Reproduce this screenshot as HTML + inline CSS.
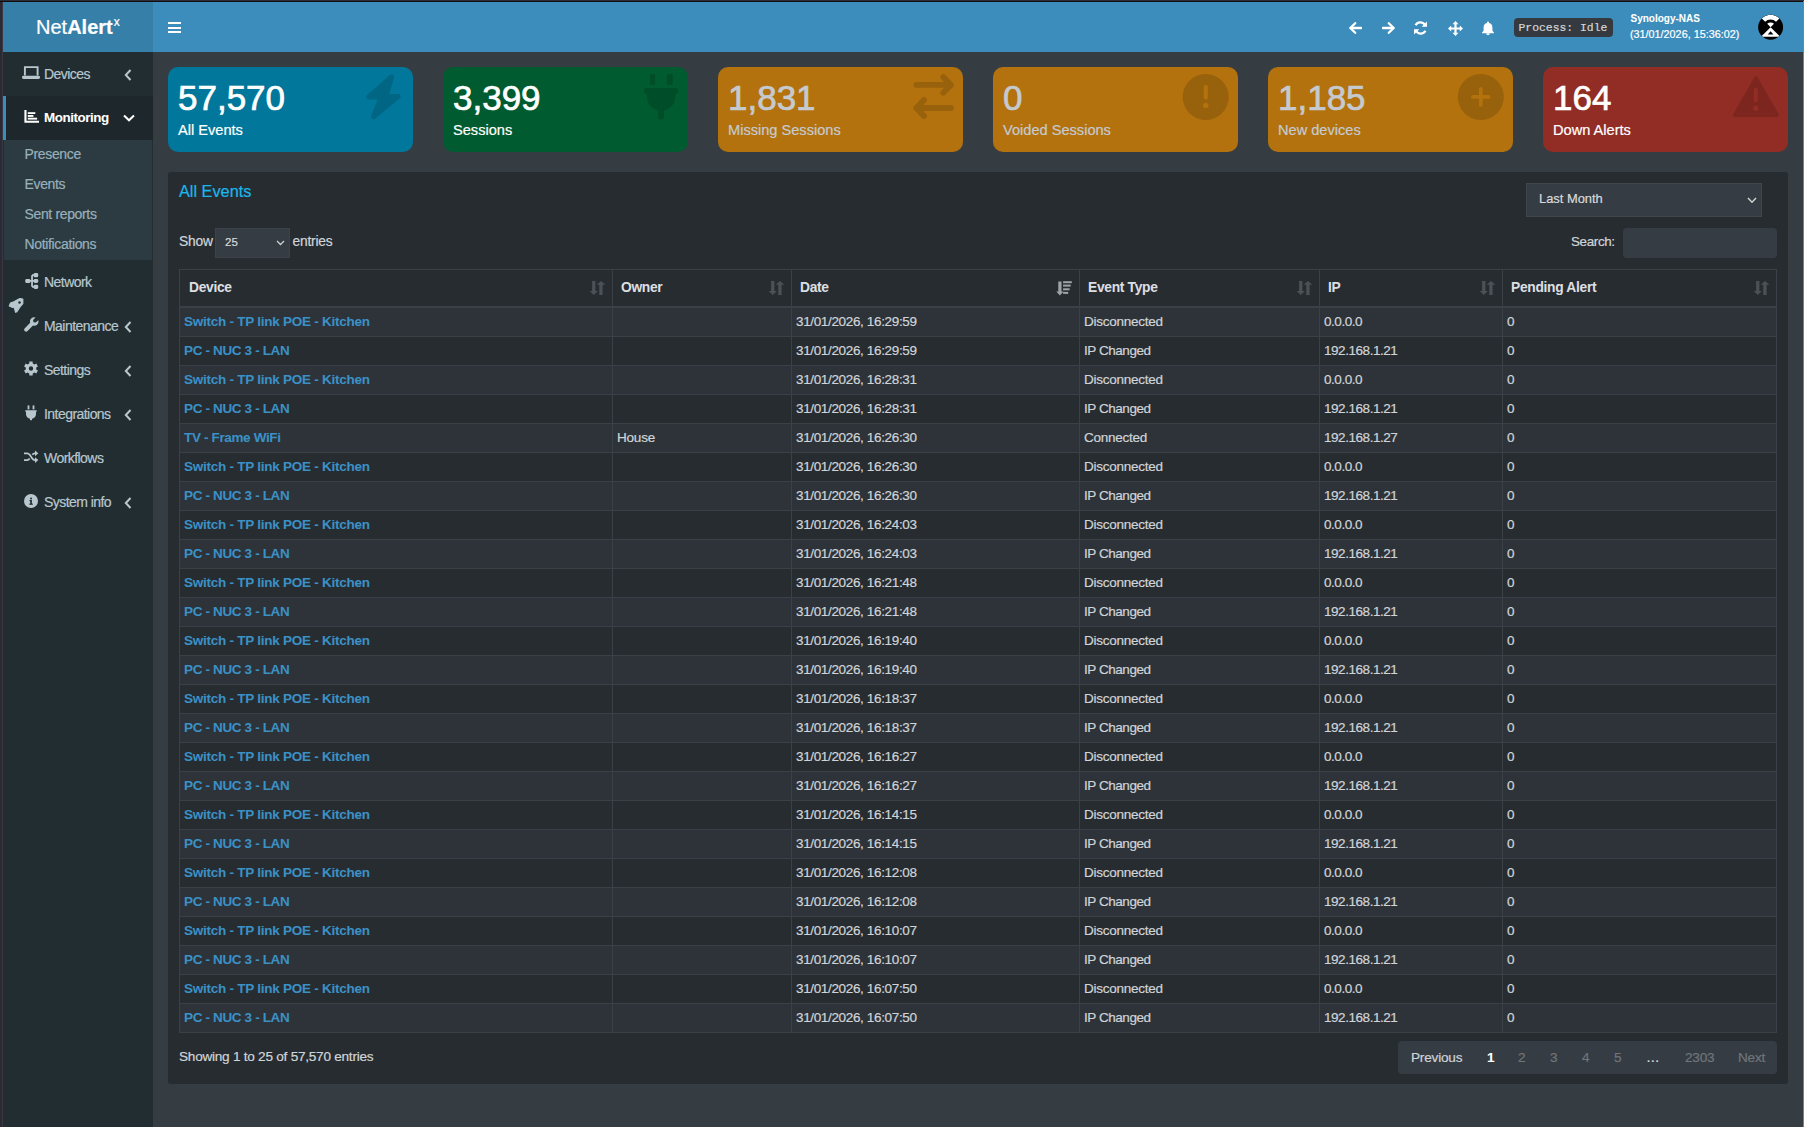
<!DOCTYPE html><html><head><meta charset="utf-8"><style>
*{margin:0;padding:0;box-sizing:border-box}
html,body{width:1804px;height:1127px;overflow:hidden;background:#353c42;font-family:"Liberation Sans",sans-serif;}
.ab{position:absolute}
.t{position:absolute;white-space:nowrap;-webkit-text-stroke:0.2px currentColor}
.n{-webkit-text-stroke:0.7px currentColor}
.t[style*="font-weight:bold"]{-webkit-text-stroke:0.05px currentColor}
</style></head><body>

<div class="ab" style="left:0;top:0;width:1804px;height:1127px;background:#353c42"></div>
<div class="ab" style="left:0;top:2px;width:1804px;height:50px;background:#3c8dbc"></div>
<div class="ab" style="left:3px;top:2px;width:150px;height:50px;background:#367fa9"></div>
<div class="t" style="left:36px;top:13px;font-size:20px;line-height:28px;color:#fff">Net<b>Alert</b><sup style="font-size:12px;vertical-align:0;position:relative;top:-8px;margin-left:1px">x</sup></div>
<div class="ab" style="left:168px;top:22px;width:13px;height:2px;background:#fff"></div><div class="ab" style="left:168px;top:26.5px;width:13px;height:2px;background:#fff"></div><div class="ab" style="left:168px;top:31px;width:13px;height:2px;background:#fff"></div>
<svg class="ab" style="left:1349px;top:21.5px" width="13" height="12" viewBox="0 0 13 12"><path d="M1.3 6h11M6.2 1.2L1.3 6L6.2 10.8" stroke="#fff" stroke-width="2.3" fill="none" stroke-linecap="round" stroke-linejoin="round"/></svg>
<svg class="ab" style="left:1381.5px;top:21.5px" width="13" height="12" viewBox="0 0 13 12"><path d="M0.7 6h11M6.8 1.2L11.7 6L6.8 10.8" stroke="#fff" stroke-width="2.3" fill="none" stroke-linecap="round" stroke-linejoin="round"/></svg>
<svg class="ab" style="left:1413px;top:21px" width="15" height="14" viewBox="0 0 15 14"><path d="M12.3 5A5.3 5.3 0 0 0 2.6 4.2M2.7 9A5.3 5.3 0 0 0 12.4 9.8" stroke="#fff" stroke-width="2.3" fill="none"/><path d="M14 0.5v5.3H8.7z M1 13.5V8.2h5.3z" fill="#fff"/></svg>
<svg class="ab" style="left:1448px;top:21px" width="15" height="15" viewBox="0 0 15 15"><path d="M7.5 0L10.5 3.2H8.6V6.4H11.8V4.5L15 7.5L11.8 10.5V8.6H8.6V11.8H10.5L7.5 15L4.5 11.8H6.4V8.6H3.2V10.5L0 7.5L3.2 4.5V6.4H6.4V3.2H4.5Z" fill="#fff"/></svg>
<svg class="ab" style="left:1481px;top:21px" width="14" height="14" viewBox="0 0 14 14"><path d="M7 0.5a1 1 0 0 1 1 1v0.6a4.3 4.3 0 0 1 3.4 4.2v2.4c0 1.2 0.6 2.1 1.6 2.8v0.8H1v-0.8c1-0.7 1.6-1.6 1.6-2.8V6.3A4.3 4.3 0 0 1 6 2.1V1.5a1 1 0 0 1 1-1z M5.3 12.6h3.4a1.7 1.7 0 0 1-3.4 0z" fill="#fff"/></svg>
<div class="ab" style="left:1514px;top:18px;width:99px;height:19px;background:#343a40;border-radius:4px"></div>
<div class="t" style="left:1518.5px;top:19px;font-family:'Liberation Mono',monospace;font-size:11.4px;line-height:19px;color:#d6d6d6">Process: Idle</div>
<div class="t" style="left:1630.5px;top:11px;font-size:10px;line-height:15px;color:#fff;font-weight:bold">Synology-NAS</div>
<div class="t" style="left:1630px;top:27px;font-size:10.8px;line-height:15px;color:#fff">(31/01/2026, 15:36:02)</div>
<svg class="ab" style="left:1757px;top:14px" width="27" height="27" viewBox="0 0 27 27"><defs><clipPath id="av"><circle cx="13.6" cy="13.2" r="12.45"/></clipPath></defs><circle cx="13.6" cy="13.2" r="12.45" fill="#000"/><g clip-path="url(#av)" fill="#fff"><path d="M4.80 4.40A12.45 12.45 0 0 1 22.40 4.40L19.04 7.76A7.7 7.7 0 0 0 8.16 7.76Z"/><path d="M13.60 13.20L10.21 9.81A4.8 4.8 0 0 1 16.99 9.81Z"/><path d="M13.60 13.20L23.20 22.80L4.00 22.80Z"/></g><path d="M13.60 17.30L16.40 20.60L10.80 20.60Z" fill="#000"/></svg>
<div class="ab" style="left:1803px;top:0;width:1px;height:1127px;background:#808080"></div>
<div class="ab" style="left:0;top:0;width:1804px;height:1px;background:#2d2c38"></div><div class="ab" style="left:0;top:1px;width:1803px;height:1px;background:#0f0d0e"></div>
<div class="ab" style="left:3px;top:52px;width:150px;height:1075px;background:#222d32"></div>
<div class="ab" style="left:0;top:0;width:2px;height:1127px;background:#2a2935"></div><div class="ab" style="left:2px;top:2px;width:1px;height:1125px;background:#3a3840"></div><div class="ab" style="left:0;top:0;width:1804px;height:1px;background:#2d2c38"></div><div class="ab" style="left:0;top:1px;width:1803px;height:1px;background:#0f0d0e"></div>
<div class="ab" style="left:3px;top:96px;width:150px;height:44px;background:#1e282c;border-left:3px solid #3c8dbc"></div>
<div class="ab" style="left:4px;top:140px;width:148px;height:120px;background:#2c3b41"></div>
<div class="t" style="left:44px;top:51.5px;font-size:14px;line-height:44px;letter-spacing:-0.55px;color:#b8c7ce;">Devices</div>
<svg class="ab" style="left:22px;top:66px" width="18" height="13" viewBox="0 0 18 13"><path d="M2.9 9.5V1.1H15.6V9.5" stroke="#b8c7ce" stroke-width="1.9" fill="none"/><rect x="0" y="9.8" width="18" height="3.1" rx="1.4" fill="#b8c7ce"/></svg>
<svg class="ab" style="left:124px;top:69px" width="8" height="12" viewBox="0 0 8 12"><path d="M6.5 1L1.8 6L6.5 11" stroke="#b8c7ce" stroke-width="2" fill="none"/></svg>
<div class="t" style="left:44px;top:95.5px;font-size:13.4px;line-height:44px;letter-spacing:-0.45px;color:#fff;font-weight:bold;">Monitoring</div>
<svg class="ab" style="left:23.5px;top:110px" width="16" height="14" viewBox="0 0 16 14"><path d="M1.45 0V11.8H15" stroke="#fff" stroke-width="2.1" fill="none"/><rect x="3.8" y="2.2" width="7.5" height="1.8" fill="#fff"/><rect x="3.8" y="5" width="5.6" height="1.9" fill="#fff"/><rect x="3.8" y="7.7" width="9.3" height="1.9" fill="#fff"/></svg>
<svg class="ab" style="left:123px;top:114px" width="12" height="8" viewBox="0 0 12 8"><path d="M1 1.5L6 6.3L11 1.5" stroke="#fff" stroke-width="2" fill="none"/></svg>
<div class="t" style="left:24.5px;top:139px;font-size:14px;line-height:30px;letter-spacing:-0.35px;color:#98b0bb">Presence</div>
<div class="t" style="left:24.5px;top:169px;font-size:14px;line-height:30px;letter-spacing:-0.35px;color:#98b0bb">Events</div>
<div class="t" style="left:24.5px;top:199px;font-size:14px;line-height:30px;letter-spacing:-0.35px;color:#98b0bb">Sent reports</div>
<div class="t" style="left:24.5px;top:229px;font-size:14px;line-height:30px;letter-spacing:-0.35px;color:#98b0bb">Notifications</div>
<div class="t" style="left:44px;top:259.5px;font-size:14px;line-height:44px;letter-spacing:-0.55px;color:#b8c7ce;">Network</div>
<svg class="ab" style="left:25px;top:273px" width="14" height="16" viewBox="0 0 14 16"><rect x="0.3" y="5.9" width="5.1" height="4.1" rx="1.3" fill="#b8c7ce"/><rect x="8.6" y="0.1" width="4.6" height="4.2" rx="1.4" fill="#b8c7ce"/><rect x="8.6" y="5.9" width="4.6" height="4.1" rx="1.4" fill="#b8c7ce"/><rect x="8.6" y="11.7" width="4.6" height="4.3" rx="1.4" fill="#b8c7ce"/><path d="M5 7.95H9M7.05 2.2V13.8M7 2.2H9M7 13.8H9" stroke="#b8c7ce" stroke-width="1.8" fill="none"/></svg>
<svg class="ab" style="left:5px;top:294px" width="24" height="24" viewBox="0 0 24 24"><path d="M14.9 4.6L17.8 5.2L17.8 9.6L14.8 13.2L11.9 17.8L10.6 18.3L9.6 14.5L8.6 12.9L7.1 13.3L4.3 11.9L5.5 9.1L8.9 7.8Z" fill="#b8c7ce" stroke="#b8c7ce" stroke-width="1.2" stroke-linejoin="round"/><circle cx="14.5" cy="8.4" r="1.25" fill="#222d32"/></svg>
<div class="t" style="left:44px;top:303.5px;font-size:14px;line-height:44px;letter-spacing:-0.55px;color:#b8c7ce;">Maintenance</div>
<svg class="ab" style="left:24px;top:317px" width="15" height="15" viewBox="0 0 15 15"><path d="M14.2 3.2l-2.4 2.4l-2.3-0.4l-0.4-2.3l2.4-2.4a4.2 4.2 0 0 0-5.3 5.3L0.8 11.3a1.9 1.9 0 0 0 2.7 2.7L9 8.6a4.2 4.2 0 0 0 5.2-5.4z" fill="#b8c7ce"/></svg>
<svg class="ab" style="left:124px;top:321px" width="8" height="12" viewBox="0 0 8 12"><path d="M6.5 1L1.8 6L6.5 11" stroke="#b8c7ce" stroke-width="2" fill="none"/></svg>
<div class="t" style="left:44px;top:347.5px;font-size:14px;line-height:44px;letter-spacing:-0.55px;color:#b8c7ce;">Settings</div>
<svg class="ab" style="left:24px;top:361px" width="14" height="15" viewBox="0 0 14 15"><path fill-rule="evenodd" d="M5.27 2.49 L5.38 0.48 L8.62 0.48 L8.73 2.49 L10.48 3.50 L12.27 2.59 L13.89 5.39 L12.20 6.49 L12.20 8.51 L13.89 9.61 L12.27 12.41 L10.48 11.50 L8.73 12.51 L8.62 14.52 L5.38 14.52 L5.27 12.51 L3.52 11.50 L1.73 12.41 L0.11 9.61 L1.80 8.51 L1.80 6.49 L0.11 5.39 L1.73 2.59 L3.52 3.50Z M7 5.3A2.2 2.2 0 1 0 7 9.7A2.2 2.2 0 1 0 7 5.3Z" fill="#b8c7ce"/></svg>
<svg class="ab" style="left:124px;top:365px" width="8" height="12" viewBox="0 0 8 12"><path d="M6.5 1L1.8 6L6.5 11" stroke="#b8c7ce" stroke-width="2" fill="none"/></svg>
<div class="t" style="left:44px;top:391.5px;font-size:14px;line-height:44px;letter-spacing:-0.55px;color:#b8c7ce;">Integrations</div>
<svg class="ab" style="left:25px;top:405px" width="12" height="16" viewBox="0 0 12 16"><rect x="2.6" y="0.4" width="1.8" height="4" fill="#b8c7ce"/><rect x="7.6" y="0.4" width="1.8" height="4" fill="#b8c7ce"/><path d="M0.3 5.2H11.7V6.8H11V9A5 5 0 0 1 1 9V6.8H0.3Z" fill="#b8c7ce"/><rect x="5" y="12" width="2" height="3.2" fill="#b8c7ce"/></svg>
<svg class="ab" style="left:124px;top:409px" width="8" height="12" viewBox="0 0 8 12"><path d="M6.5 1L1.8 6L6.5 11" stroke="#b8c7ce" stroke-width="2" fill="none"/></svg>
<div class="t" style="left:44px;top:435.5px;font-size:14px;line-height:44px;letter-spacing:-0.55px;color:#b8c7ce;">Workflows</div>
<svg class="ab" style="left:24px;top:450px" width="15" height="14" viewBox="0 0 15 14"><path d="M0 3.3h3.2c1.2 0 1.8 0.5 2.5 1.5l2.6 3.8c0.7 1 1.3 1.5 2.5 1.5H11.8M0 10.1h3.2c1.2 0 1.8-0.5 2.5-1.5M8.3 4.8c0.7-1 1.3-1.5 2.5-1.5H11.8" stroke="#b8c7ce" stroke-width="1.8" fill="none"/><path d="M11 0.4l3.3 2.9l-3.3 2.9z M11 7.2l3.3 2.9l-3.3 2.9z" fill="#b8c7ce"/></svg>
<div class="t" style="left:44px;top:479.5px;font-size:14px;line-height:44px;letter-spacing:-0.55px;color:#b8c7ce;">System info</div>
<svg class="ab" style="left:24px;top:494px" width="14" height="14" viewBox="0 0 14 14"><circle cx="7" cy="7" r="7" fill="#b8c7ce"/><rect x="6.2" y="6.2" width="1.7" height="3.8" fill="#222d32"/><rect x="5.3" y="9.6" width="3.5" height="1.2" fill="#222d32"/><rect x="5.5" y="6" width="2.2" height="1.1" fill="#222d32"/><circle cx="7.05" cy="4.4" r="1" fill="#222d32"/></svg>
<svg class="ab" style="left:124px;top:497px" width="8" height="12" viewBox="0 0 8 12"><path d="M6.5 1L1.8 6L6.5 11" stroke="#b8c7ce" stroke-width="2" fill="none"/></svg>
<div class="ab" style="left:168px;top:67px;width:245px;height:85px;background:#01789b;border-radius:10px"></div>
<div class="t n" style="left:178px;top:76px;font-size:35px;line-height:44px;color:#fff">57,570</div>
<div class="t" style="left:178px;top:120px;font-size:14.6px;line-height:20px;color:#fff">All Events</div>
<svg class="ab" style="left:353px;top:67px" width="60" height="85" viewBox="0 0 60 85"><path d="M38.5 10L15.8 30L28.3 30.1L20.5 49.7L45.1 29.5L33 29.4Z" fill="#016684" stroke="#016684" stroke-width="5" stroke-linejoin="round"/></svg>
<div class="ab" style="left:443px;top:67px;width:245px;height:85px;background:#005b30;border-radius:10px"></div>
<div class="t n" style="left:453px;top:76px;font-size:35px;line-height:44px;color:#fff">3,399</div>
<div class="t" style="left:453px;top:120px;font-size:14.6px;line-height:20px;color:#fff">Sessions</div>
<svg class="ab" style="left:628px;top:67px" width="60" height="85" viewBox="0 0 60 85"><rect x="21.9" y="6.9" width="5.2" height="11" rx="1" fill="#004d29"/><rect x="38.9" y="6.9" width="5.8" height="11" rx="1" fill="#004d29"/><rect x="15.8" y="21.1" width="34.4" height="5.8" rx="2.9" fill="#004d29"/><path d="M19 26.5H47.3V29.5A14.15 14.15 0 0 1 19 29.5Z" fill="#004d29"/><path d="M33 38V49.5" stroke="#004d29" stroke-width="6" stroke-linecap="round"/></svg>
<div class="ab" style="left:718px;top:67px;width:245px;height:85px;background:#b3720d;border-radius:10px"></div>
<div class="t n" style="left:728px;top:76px;font-size:35px;line-height:44px;color:#c5cad1">1,831</div>
<div class="t" style="left:728px;top:120px;font-size:14.6px;line-height:20px;color:#c5cad1">Missing Sessions</div>
<svg class="ab" style="left:903px;top:67px" width="60" height="85" viewBox="0 0 60 85"><path d="M13.4 17.9H47.9M40.3 10.1L47.9 17.9L40.3 25.7M47.9 41H13.4M21 33L13.4 41L21 49" stroke="#98610b" stroke-width="5.8" fill="none" stroke-linecap="round" stroke-linejoin="round"/></svg>
<div class="ab" style="left:993px;top:67px;width:245px;height:85px;background:#b3720d;border-radius:10px"></div>
<div class="t n" style="left:1003px;top:76px;font-size:35px;line-height:44px;color:#c5cad1">0</div>
<div class="t" style="left:1003px;top:120px;font-size:14.6px;line-height:20px;color:#c5cad1">Voided Sessions</div>
<svg class="ab" style="left:1178px;top:67px" width="60" height="85" viewBox="0 0 60 85"><circle cx="27.7" cy="29.9" r="23" fill="#98610b"/><path d="M27.75 19.9V30.6" stroke="#b3720d" stroke-width="4.1" stroke-linecap="round"/><circle cx="27.75" cy="38.4" r="2.7" fill="#b3720d"/></svg>
<div class="ab" style="left:1268px;top:67px;width:245px;height:85px;background:#b3720d;border-radius:10px"></div>
<div class="t n" style="left:1278px;top:76px;font-size:35px;line-height:44px;color:#c5cad1">1,185</div>
<div class="t" style="left:1278px;top:120px;font-size:14.6px;line-height:20px;color:#c5cad1">New devices</div>
<svg class="ab" style="left:1453px;top:67px" width="60" height="85" viewBox="0 0 60 85"><circle cx="27.8" cy="29.9" r="23" fill="#98610b"/><path d="M19.9 29.9H35.7M27.8 21.8V38" stroke="#b3720d" stroke-width="3.7" stroke-linecap="round"/></svg>
<div class="ab" style="left:1543px;top:67px;width:245px;height:85px;background:#922d25;border-radius:10px"></div>
<div class="t n" style="left:1553px;top:76px;font-size:35px;line-height:44px;color:#fff">164</div>
<div class="t" style="left:1553px;top:120px;font-size:14.6px;line-height:20px;color:#fff">Down Alerts</div>
<svg class="ab" style="left:1728px;top:67px" width="60" height="85" viewBox="0 0 60 85"><path d="M27.9 11.5L7 47.9H48.8Z" fill="#7c261f" stroke="#7c261f" stroke-width="4" stroke-linejoin="round"/><path d="M27.75 22.8V33.2" stroke="#922d25" stroke-width="4.1" stroke-linecap="round"/><circle cx="27.75" cy="41.3" r="2.7" fill="#922d25"/></svg>
<div class="ab" style="left:168px;top:172px;width:1620px;height:912px;background:#272c30;border-radius:3px"></div>
<div class="t" style="left:179px;top:180px;font-size:16.3px;line-height:22px;color:#1ab7ea">All Events</div>
<div class="ab" style="left:1526px;top:183px;width:236px;height:34px;background:#363c43;border:1px solid #40464d"></div>
<div class="t" style="left:1539px;top:183px;font-size:12.9px;line-height:32px;color:#d8dadc">Last Month</div>
<svg class="ab" style="left:1747px;top:197px" width="10" height="7" viewBox="0 0 10 7"><path d="M1 1l4 4.2l4-4.2" stroke="#d0d0d0" stroke-width="1.5" fill="none"/></svg>
<div class="t" style="left:179px;top:227.5px;font-size:13.8px;line-height:28px;letter-spacing:-0.2px;color:#d0d4d8">Show</div>
<div class="ab" style="left:215px;top:228px;width:75px;height:30px;background:#363c43;border:1px solid #3d434a"></div>
<div class="t" style="left:225px;top:228px;font-size:11.5px;line-height:29px;color:#d8dadc">25</div>
<svg class="ab" style="left:276px;top:240px" width="9" height="6" viewBox="0 0 9 6"><path d="M1 1l3.5 3.5l3.5-3.5" stroke="#d0d0d0" stroke-width="1.3" fill="none"/></svg>
<div class="t" style="left:292.5px;top:227.5px;font-size:13.8px;line-height:28px;letter-spacing:-0.2px;color:#d0d4d8">entries</div>
<div class="t" style="left:1571px;top:227.5px;font-size:13.4px;line-height:28px;letter-spacing:-0.35px;color:#d0d4d8">Search:</div>
<div class="ab" style="left:1623px;top:228px;width:154px;height:30px;background:#363c43;border-radius:4px"></div>
<div class="ab" style="left:179px;top:269px;width:1598px;height:1px;background:#3a4047"></div>
<div class="ab" style="left:179px;top:306px;width:1598px;height:2px;background:#3a4047"></div>
<div class="ab" style="left:179px;top:308px;width:1598px;height:28px;background:#2d3339"></div>
<div class="ab" style="left:179px;top:336px;width:1598px;height:1px;background:#3a4047"></div>
<div class="ab" style="left:179px;top:365px;width:1598px;height:1px;background:#3a4047"></div>
<div class="ab" style="left:179px;top:366px;width:1598px;height:28px;background:#2d3339"></div>
<div class="ab" style="left:179px;top:394px;width:1598px;height:1px;background:#3a4047"></div>
<div class="ab" style="left:179px;top:423px;width:1598px;height:1px;background:#3a4047"></div>
<div class="ab" style="left:179px;top:424px;width:1598px;height:28px;background:#2d3339"></div>
<div class="ab" style="left:179px;top:452px;width:1598px;height:1px;background:#3a4047"></div>
<div class="ab" style="left:179px;top:481px;width:1598px;height:1px;background:#3a4047"></div>
<div class="ab" style="left:179px;top:482px;width:1598px;height:28px;background:#2d3339"></div>
<div class="ab" style="left:179px;top:510px;width:1598px;height:1px;background:#3a4047"></div>
<div class="ab" style="left:179px;top:539px;width:1598px;height:1px;background:#3a4047"></div>
<div class="ab" style="left:179px;top:540px;width:1598px;height:28px;background:#2d3339"></div>
<div class="ab" style="left:179px;top:568px;width:1598px;height:1px;background:#3a4047"></div>
<div class="ab" style="left:179px;top:597px;width:1598px;height:1px;background:#3a4047"></div>
<div class="ab" style="left:179px;top:598px;width:1598px;height:28px;background:#2d3339"></div>
<div class="ab" style="left:179px;top:626px;width:1598px;height:1px;background:#3a4047"></div>
<div class="ab" style="left:179px;top:655px;width:1598px;height:1px;background:#3a4047"></div>
<div class="ab" style="left:179px;top:656px;width:1598px;height:28px;background:#2d3339"></div>
<div class="ab" style="left:179px;top:684px;width:1598px;height:1px;background:#3a4047"></div>
<div class="ab" style="left:179px;top:713px;width:1598px;height:1px;background:#3a4047"></div>
<div class="ab" style="left:179px;top:714px;width:1598px;height:28px;background:#2d3339"></div>
<div class="ab" style="left:179px;top:742px;width:1598px;height:1px;background:#3a4047"></div>
<div class="ab" style="left:179px;top:771px;width:1598px;height:1px;background:#3a4047"></div>
<div class="ab" style="left:179px;top:772px;width:1598px;height:28px;background:#2d3339"></div>
<div class="ab" style="left:179px;top:800px;width:1598px;height:1px;background:#3a4047"></div>
<div class="ab" style="left:179px;top:829px;width:1598px;height:1px;background:#3a4047"></div>
<div class="ab" style="left:179px;top:830px;width:1598px;height:28px;background:#2d3339"></div>
<div class="ab" style="left:179px;top:858px;width:1598px;height:1px;background:#3a4047"></div>
<div class="ab" style="left:179px;top:887px;width:1598px;height:1px;background:#3a4047"></div>
<div class="ab" style="left:179px;top:888px;width:1598px;height:28px;background:#2d3339"></div>
<div class="ab" style="left:179px;top:916px;width:1598px;height:1px;background:#3a4047"></div>
<div class="ab" style="left:179px;top:945px;width:1598px;height:1px;background:#3a4047"></div>
<div class="ab" style="left:179px;top:946px;width:1598px;height:28px;background:#2d3339"></div>
<div class="ab" style="left:179px;top:974px;width:1598px;height:1px;background:#3a4047"></div>
<div class="ab" style="left:179px;top:1003px;width:1598px;height:1px;background:#3a4047"></div>
<div class="ab" style="left:179px;top:1004px;width:1598px;height:28px;background:#2d3339"></div>
<div class="ab" style="left:179px;top:1032px;width:1598px;height:1px;background:#3a4047"></div>
<div class="ab" style="left:179px;top:269px;width:1px;height:764px;background:#3a4047"></div>
<div class="ab" style="left:612px;top:269px;width:1px;height:764px;background:#3a4047"></div>
<div class="ab" style="left:791px;top:269px;width:1px;height:764px;background:#3a4047"></div>
<div class="ab" style="left:1079px;top:269px;width:1px;height:764px;background:#3a4047"></div>
<div class="ab" style="left:1319px;top:269px;width:1px;height:764px;background:#3a4047"></div>
<div class="ab" style="left:1502px;top:269px;width:1px;height:764px;background:#3a4047"></div>
<div class="ab" style="left:1776px;top:269px;width:1px;height:764px;background:#3a4047"></div>
<div class="t" style="left:189px;top:269.5px;font-size:13.8px;line-height:36px;letter-spacing:-0.3px;font-weight:bold;color:#dcdfe1">Device</div>
<svg class="ab" style="left:589.8px;top:281px" width="16" height="15" viewBox="0 0 16 15" overflow="visible">
<path d="M2.1 0h3.3v10.1h2.5L3.75 14L-0.3 10.1h2.4z" fill="#4b5157"/><path d="M9.3 14h3.3V3.8h2.8L11 0L6.7 3.8h2.6z" fill="#4b5157"/></svg>
<div class="t" style="left:621px;top:269.5px;font-size:13.8px;line-height:36px;letter-spacing:-0.3px;font-weight:bold;color:#dcdfe1">Owner</div>
<svg class="ab" style="left:768.8px;top:281px" width="16" height="15" viewBox="0 0 16 15" overflow="visible">
<path d="M2.1 0h3.3v10.1h2.5L3.75 14L-0.3 10.1h2.4z" fill="#4b5157"/><path d="M9.3 14h3.3V3.8h2.8L11 0L6.7 3.8h2.6z" fill="#4b5157"/></svg>
<div class="t" style="left:800px;top:269.5px;font-size:13.8px;line-height:36px;letter-spacing:-0.3px;font-weight:bold;color:#dcdfe1">Date</div>
<svg class="ab" style="left:1055px;top:281px" width="18" height="15" viewBox="0 0 18 15">
<path d="M3.3 0.4h3.2v10.2h2l-3.6 3.9l-3.6-3.9h2z" fill="#9ea3a8"/><rect x="8.1" y="0.2" width="8.7" height="2" fill="#9ea3a8"/><rect x="8.1" y="3.6" width="7.6" height="2" fill="#9ea3a8"/><rect x="8.1" y="7.3" width="6.5" height="2" fill="#9ea3a8"/><rect x="8.1" y="10.9" width="5.1" height="2" fill="#9ea3a8"/></svg>
<div class="t" style="left:1088px;top:269.5px;font-size:13.8px;line-height:36px;letter-spacing:-0.3px;font-weight:bold;color:#dcdfe1">Event Type</div>
<svg class="ab" style="left:1296.8px;top:281px" width="16" height="15" viewBox="0 0 16 15" overflow="visible">
<path d="M2.1 0h3.3v10.1h2.5L3.75 14L-0.3 10.1h2.4z" fill="#4b5157"/><path d="M9.3 14h3.3V3.8h2.8L11 0L6.7 3.8h2.6z" fill="#4b5157"/></svg>
<div class="t" style="left:1328px;top:269.5px;font-size:13.8px;line-height:36px;letter-spacing:-0.3px;font-weight:bold;color:#dcdfe1">IP</div>
<svg class="ab" style="left:1479.8px;top:281px" width="16" height="15" viewBox="0 0 16 15" overflow="visible">
<path d="M2.1 0h3.3v10.1h2.5L3.75 14L-0.3 10.1h2.4z" fill="#4b5157"/><path d="M9.3 14h3.3V3.8h2.8L11 0L6.7 3.8h2.6z" fill="#4b5157"/></svg>
<div class="t" style="left:1511px;top:269.5px;font-size:13.8px;line-height:36px;letter-spacing:-0.3px;font-weight:bold;color:#dcdfe1">Pending Alert</div>
<svg class="ab" style="left:1753.8px;top:281px" width="16" height="15" viewBox="0 0 16 15" overflow="visible">
<path d="M2.1 0h3.3v10.1h2.5L3.75 14L-0.3 10.1h2.4z" fill="#4b5157"/><path d="M9.3 14h3.3V3.8h2.8L11 0L6.7 3.8h2.6z" fill="#4b5157"/></svg>
<div class="t" style="left:184px;top:307.5px;font-size:13.5px;line-height:28px;letter-spacing:-0.25px;font-weight:bold;color:#3b91c6">Switch - TP link POE - Kitchen</div>
<div class="t" style="left:796px;top:307.5px;font-size:13.5px;line-height:28px;letter-spacing:-0.35px;color:#d0d4d8">31/01/2026, 16:29:59</div>
<div class="t" style="left:1084px;top:307.5px;font-size:13.5px;line-height:28px;letter-spacing:-0.25px;color:#d0d4d8">Disconnected</div>
<div class="t" style="left:1324px;top:307.5px;font-size:13.5px;line-height:28px;letter-spacing:-0.45px;color:#d0d4d8">0.0.0.0</div>
<div class="t" style="left:1507px;top:307.5px;font-size:13.5px;line-height:28px;letter-spacing:0px;color:#d0d4d8">0</div>
<div class="t" style="left:184px;top:336.5px;font-size:13.5px;line-height:28px;letter-spacing:-0.35px;font-weight:bold;color:#3b91c6">PC - NUC 3 - LAN</div>
<div class="t" style="left:796px;top:336.5px;font-size:13.5px;line-height:28px;letter-spacing:-0.35px;color:#d0d4d8">31/01/2026, 16:29:59</div>
<div class="t" style="left:1084px;top:336.5px;font-size:13.5px;line-height:28px;letter-spacing:-0.45px;color:#d0d4d8">IP Changed</div>
<div class="t" style="left:1324px;top:336.5px;font-size:13.5px;line-height:28px;letter-spacing:-0.45px;color:#d0d4d8">192.168.1.21</div>
<div class="t" style="left:1507px;top:336.5px;font-size:13.5px;line-height:28px;letter-spacing:0px;color:#d0d4d8">0</div>
<div class="t" style="left:184px;top:365.5px;font-size:13.5px;line-height:28px;letter-spacing:-0.25px;font-weight:bold;color:#3b91c6">Switch - TP link POE - Kitchen</div>
<div class="t" style="left:796px;top:365.5px;font-size:13.5px;line-height:28px;letter-spacing:-0.35px;color:#d0d4d8">31/01/2026, 16:28:31</div>
<div class="t" style="left:1084px;top:365.5px;font-size:13.5px;line-height:28px;letter-spacing:-0.25px;color:#d0d4d8">Disconnected</div>
<div class="t" style="left:1324px;top:365.5px;font-size:13.5px;line-height:28px;letter-spacing:-0.45px;color:#d0d4d8">0.0.0.0</div>
<div class="t" style="left:1507px;top:365.5px;font-size:13.5px;line-height:28px;letter-spacing:0px;color:#d0d4d8">0</div>
<div class="t" style="left:184px;top:394.5px;font-size:13.5px;line-height:28px;letter-spacing:-0.35px;font-weight:bold;color:#3b91c6">PC - NUC 3 - LAN</div>
<div class="t" style="left:796px;top:394.5px;font-size:13.5px;line-height:28px;letter-spacing:-0.35px;color:#d0d4d8">31/01/2026, 16:28:31</div>
<div class="t" style="left:1084px;top:394.5px;font-size:13.5px;line-height:28px;letter-spacing:-0.45px;color:#d0d4d8">IP Changed</div>
<div class="t" style="left:1324px;top:394.5px;font-size:13.5px;line-height:28px;letter-spacing:-0.45px;color:#d0d4d8">192.168.1.21</div>
<div class="t" style="left:1507px;top:394.5px;font-size:13.5px;line-height:28px;letter-spacing:0px;color:#d0d4d8">0</div>
<div class="t" style="left:184px;top:423.5px;font-size:13.5px;line-height:28px;letter-spacing:-0.35px;font-weight:bold;color:#3b91c6">TV - Frame WiFi</div>
<div class="t" style="left:617px;top:423.5px;font-size:13.5px;line-height:28px;letter-spacing:-0.2px;color:#d0d4d8">House</div>
<div class="t" style="left:796px;top:423.5px;font-size:13.5px;line-height:28px;letter-spacing:-0.35px;color:#d0d4d8">31/01/2026, 16:26:30</div>
<div class="t" style="left:1084px;top:423.5px;font-size:13.5px;line-height:28px;letter-spacing:-0.25px;color:#d0d4d8">Connected</div>
<div class="t" style="left:1324px;top:423.5px;font-size:13.5px;line-height:28px;letter-spacing:-0.45px;color:#d0d4d8">192.168.1.27</div>
<div class="t" style="left:1507px;top:423.5px;font-size:13.5px;line-height:28px;letter-spacing:0px;color:#d0d4d8">0</div>
<div class="t" style="left:184px;top:452.5px;font-size:13.5px;line-height:28px;letter-spacing:-0.25px;font-weight:bold;color:#3b91c6">Switch - TP link POE - Kitchen</div>
<div class="t" style="left:796px;top:452.5px;font-size:13.5px;line-height:28px;letter-spacing:-0.35px;color:#d0d4d8">31/01/2026, 16:26:30</div>
<div class="t" style="left:1084px;top:452.5px;font-size:13.5px;line-height:28px;letter-spacing:-0.25px;color:#d0d4d8">Disconnected</div>
<div class="t" style="left:1324px;top:452.5px;font-size:13.5px;line-height:28px;letter-spacing:-0.45px;color:#d0d4d8">0.0.0.0</div>
<div class="t" style="left:1507px;top:452.5px;font-size:13.5px;line-height:28px;letter-spacing:0px;color:#d0d4d8">0</div>
<div class="t" style="left:184px;top:481.5px;font-size:13.5px;line-height:28px;letter-spacing:-0.35px;font-weight:bold;color:#3b91c6">PC - NUC 3 - LAN</div>
<div class="t" style="left:796px;top:481.5px;font-size:13.5px;line-height:28px;letter-spacing:-0.35px;color:#d0d4d8">31/01/2026, 16:26:30</div>
<div class="t" style="left:1084px;top:481.5px;font-size:13.5px;line-height:28px;letter-spacing:-0.45px;color:#d0d4d8">IP Changed</div>
<div class="t" style="left:1324px;top:481.5px;font-size:13.5px;line-height:28px;letter-spacing:-0.45px;color:#d0d4d8">192.168.1.21</div>
<div class="t" style="left:1507px;top:481.5px;font-size:13.5px;line-height:28px;letter-spacing:0px;color:#d0d4d8">0</div>
<div class="t" style="left:184px;top:510.5px;font-size:13.5px;line-height:28px;letter-spacing:-0.25px;font-weight:bold;color:#3b91c6">Switch - TP link POE - Kitchen</div>
<div class="t" style="left:796px;top:510.5px;font-size:13.5px;line-height:28px;letter-spacing:-0.35px;color:#d0d4d8">31/01/2026, 16:24:03</div>
<div class="t" style="left:1084px;top:510.5px;font-size:13.5px;line-height:28px;letter-spacing:-0.25px;color:#d0d4d8">Disconnected</div>
<div class="t" style="left:1324px;top:510.5px;font-size:13.5px;line-height:28px;letter-spacing:-0.45px;color:#d0d4d8">0.0.0.0</div>
<div class="t" style="left:1507px;top:510.5px;font-size:13.5px;line-height:28px;letter-spacing:0px;color:#d0d4d8">0</div>
<div class="t" style="left:184px;top:539.5px;font-size:13.5px;line-height:28px;letter-spacing:-0.35px;font-weight:bold;color:#3b91c6">PC - NUC 3 - LAN</div>
<div class="t" style="left:796px;top:539.5px;font-size:13.5px;line-height:28px;letter-spacing:-0.35px;color:#d0d4d8">31/01/2026, 16:24:03</div>
<div class="t" style="left:1084px;top:539.5px;font-size:13.5px;line-height:28px;letter-spacing:-0.45px;color:#d0d4d8">IP Changed</div>
<div class="t" style="left:1324px;top:539.5px;font-size:13.5px;line-height:28px;letter-spacing:-0.45px;color:#d0d4d8">192.168.1.21</div>
<div class="t" style="left:1507px;top:539.5px;font-size:13.5px;line-height:28px;letter-spacing:0px;color:#d0d4d8">0</div>
<div class="t" style="left:184px;top:568.5px;font-size:13.5px;line-height:28px;letter-spacing:-0.25px;font-weight:bold;color:#3b91c6">Switch - TP link POE - Kitchen</div>
<div class="t" style="left:796px;top:568.5px;font-size:13.5px;line-height:28px;letter-spacing:-0.35px;color:#d0d4d8">31/01/2026, 16:21:48</div>
<div class="t" style="left:1084px;top:568.5px;font-size:13.5px;line-height:28px;letter-spacing:-0.25px;color:#d0d4d8">Disconnected</div>
<div class="t" style="left:1324px;top:568.5px;font-size:13.5px;line-height:28px;letter-spacing:-0.45px;color:#d0d4d8">0.0.0.0</div>
<div class="t" style="left:1507px;top:568.5px;font-size:13.5px;line-height:28px;letter-spacing:0px;color:#d0d4d8">0</div>
<div class="t" style="left:184px;top:597.5px;font-size:13.5px;line-height:28px;letter-spacing:-0.35px;font-weight:bold;color:#3b91c6">PC - NUC 3 - LAN</div>
<div class="t" style="left:796px;top:597.5px;font-size:13.5px;line-height:28px;letter-spacing:-0.35px;color:#d0d4d8">31/01/2026, 16:21:48</div>
<div class="t" style="left:1084px;top:597.5px;font-size:13.5px;line-height:28px;letter-spacing:-0.45px;color:#d0d4d8">IP Changed</div>
<div class="t" style="left:1324px;top:597.5px;font-size:13.5px;line-height:28px;letter-spacing:-0.45px;color:#d0d4d8">192.168.1.21</div>
<div class="t" style="left:1507px;top:597.5px;font-size:13.5px;line-height:28px;letter-spacing:0px;color:#d0d4d8">0</div>
<div class="t" style="left:184px;top:626.5px;font-size:13.5px;line-height:28px;letter-spacing:-0.25px;font-weight:bold;color:#3b91c6">Switch - TP link POE - Kitchen</div>
<div class="t" style="left:796px;top:626.5px;font-size:13.5px;line-height:28px;letter-spacing:-0.35px;color:#d0d4d8">31/01/2026, 16:19:40</div>
<div class="t" style="left:1084px;top:626.5px;font-size:13.5px;line-height:28px;letter-spacing:-0.25px;color:#d0d4d8">Disconnected</div>
<div class="t" style="left:1324px;top:626.5px;font-size:13.5px;line-height:28px;letter-spacing:-0.45px;color:#d0d4d8">0.0.0.0</div>
<div class="t" style="left:1507px;top:626.5px;font-size:13.5px;line-height:28px;letter-spacing:0px;color:#d0d4d8">0</div>
<div class="t" style="left:184px;top:655.5px;font-size:13.5px;line-height:28px;letter-spacing:-0.35px;font-weight:bold;color:#3b91c6">PC - NUC 3 - LAN</div>
<div class="t" style="left:796px;top:655.5px;font-size:13.5px;line-height:28px;letter-spacing:-0.35px;color:#d0d4d8">31/01/2026, 16:19:40</div>
<div class="t" style="left:1084px;top:655.5px;font-size:13.5px;line-height:28px;letter-spacing:-0.45px;color:#d0d4d8">IP Changed</div>
<div class="t" style="left:1324px;top:655.5px;font-size:13.5px;line-height:28px;letter-spacing:-0.45px;color:#d0d4d8">192.168.1.21</div>
<div class="t" style="left:1507px;top:655.5px;font-size:13.5px;line-height:28px;letter-spacing:0px;color:#d0d4d8">0</div>
<div class="t" style="left:184px;top:684.5px;font-size:13.5px;line-height:28px;letter-spacing:-0.25px;font-weight:bold;color:#3b91c6">Switch - TP link POE - Kitchen</div>
<div class="t" style="left:796px;top:684.5px;font-size:13.5px;line-height:28px;letter-spacing:-0.35px;color:#d0d4d8">31/01/2026, 16:18:37</div>
<div class="t" style="left:1084px;top:684.5px;font-size:13.5px;line-height:28px;letter-spacing:-0.25px;color:#d0d4d8">Disconnected</div>
<div class="t" style="left:1324px;top:684.5px;font-size:13.5px;line-height:28px;letter-spacing:-0.45px;color:#d0d4d8">0.0.0.0</div>
<div class="t" style="left:1507px;top:684.5px;font-size:13.5px;line-height:28px;letter-spacing:0px;color:#d0d4d8">0</div>
<div class="t" style="left:184px;top:713.5px;font-size:13.5px;line-height:28px;letter-spacing:-0.35px;font-weight:bold;color:#3b91c6">PC - NUC 3 - LAN</div>
<div class="t" style="left:796px;top:713.5px;font-size:13.5px;line-height:28px;letter-spacing:-0.35px;color:#d0d4d8">31/01/2026, 16:18:37</div>
<div class="t" style="left:1084px;top:713.5px;font-size:13.5px;line-height:28px;letter-spacing:-0.45px;color:#d0d4d8">IP Changed</div>
<div class="t" style="left:1324px;top:713.5px;font-size:13.5px;line-height:28px;letter-spacing:-0.45px;color:#d0d4d8">192.168.1.21</div>
<div class="t" style="left:1507px;top:713.5px;font-size:13.5px;line-height:28px;letter-spacing:0px;color:#d0d4d8">0</div>
<div class="t" style="left:184px;top:742.5px;font-size:13.5px;line-height:28px;letter-spacing:-0.25px;font-weight:bold;color:#3b91c6">Switch - TP link POE - Kitchen</div>
<div class="t" style="left:796px;top:742.5px;font-size:13.5px;line-height:28px;letter-spacing:-0.35px;color:#d0d4d8">31/01/2026, 16:16:27</div>
<div class="t" style="left:1084px;top:742.5px;font-size:13.5px;line-height:28px;letter-spacing:-0.25px;color:#d0d4d8">Disconnected</div>
<div class="t" style="left:1324px;top:742.5px;font-size:13.5px;line-height:28px;letter-spacing:-0.45px;color:#d0d4d8">0.0.0.0</div>
<div class="t" style="left:1507px;top:742.5px;font-size:13.5px;line-height:28px;letter-spacing:0px;color:#d0d4d8">0</div>
<div class="t" style="left:184px;top:771.5px;font-size:13.5px;line-height:28px;letter-spacing:-0.35px;font-weight:bold;color:#3b91c6">PC - NUC 3 - LAN</div>
<div class="t" style="left:796px;top:771.5px;font-size:13.5px;line-height:28px;letter-spacing:-0.35px;color:#d0d4d8">31/01/2026, 16:16:27</div>
<div class="t" style="left:1084px;top:771.5px;font-size:13.5px;line-height:28px;letter-spacing:-0.45px;color:#d0d4d8">IP Changed</div>
<div class="t" style="left:1324px;top:771.5px;font-size:13.5px;line-height:28px;letter-spacing:-0.45px;color:#d0d4d8">192.168.1.21</div>
<div class="t" style="left:1507px;top:771.5px;font-size:13.5px;line-height:28px;letter-spacing:0px;color:#d0d4d8">0</div>
<div class="t" style="left:184px;top:800.5px;font-size:13.5px;line-height:28px;letter-spacing:-0.25px;font-weight:bold;color:#3b91c6">Switch - TP link POE - Kitchen</div>
<div class="t" style="left:796px;top:800.5px;font-size:13.5px;line-height:28px;letter-spacing:-0.35px;color:#d0d4d8">31/01/2026, 16:14:15</div>
<div class="t" style="left:1084px;top:800.5px;font-size:13.5px;line-height:28px;letter-spacing:-0.25px;color:#d0d4d8">Disconnected</div>
<div class="t" style="left:1324px;top:800.5px;font-size:13.5px;line-height:28px;letter-spacing:-0.45px;color:#d0d4d8">0.0.0.0</div>
<div class="t" style="left:1507px;top:800.5px;font-size:13.5px;line-height:28px;letter-spacing:0px;color:#d0d4d8">0</div>
<div class="t" style="left:184px;top:829.5px;font-size:13.5px;line-height:28px;letter-spacing:-0.35px;font-weight:bold;color:#3b91c6">PC - NUC 3 - LAN</div>
<div class="t" style="left:796px;top:829.5px;font-size:13.5px;line-height:28px;letter-spacing:-0.35px;color:#d0d4d8">31/01/2026, 16:14:15</div>
<div class="t" style="left:1084px;top:829.5px;font-size:13.5px;line-height:28px;letter-spacing:-0.45px;color:#d0d4d8">IP Changed</div>
<div class="t" style="left:1324px;top:829.5px;font-size:13.5px;line-height:28px;letter-spacing:-0.45px;color:#d0d4d8">192.168.1.21</div>
<div class="t" style="left:1507px;top:829.5px;font-size:13.5px;line-height:28px;letter-spacing:0px;color:#d0d4d8">0</div>
<div class="t" style="left:184px;top:858.5px;font-size:13.5px;line-height:28px;letter-spacing:-0.25px;font-weight:bold;color:#3b91c6">Switch - TP link POE - Kitchen</div>
<div class="t" style="left:796px;top:858.5px;font-size:13.5px;line-height:28px;letter-spacing:-0.35px;color:#d0d4d8">31/01/2026, 16:12:08</div>
<div class="t" style="left:1084px;top:858.5px;font-size:13.5px;line-height:28px;letter-spacing:-0.25px;color:#d0d4d8">Disconnected</div>
<div class="t" style="left:1324px;top:858.5px;font-size:13.5px;line-height:28px;letter-spacing:-0.45px;color:#d0d4d8">0.0.0.0</div>
<div class="t" style="left:1507px;top:858.5px;font-size:13.5px;line-height:28px;letter-spacing:0px;color:#d0d4d8">0</div>
<div class="t" style="left:184px;top:887.5px;font-size:13.5px;line-height:28px;letter-spacing:-0.35px;font-weight:bold;color:#3b91c6">PC - NUC 3 - LAN</div>
<div class="t" style="left:796px;top:887.5px;font-size:13.5px;line-height:28px;letter-spacing:-0.35px;color:#d0d4d8">31/01/2026, 16:12:08</div>
<div class="t" style="left:1084px;top:887.5px;font-size:13.5px;line-height:28px;letter-spacing:-0.45px;color:#d0d4d8">IP Changed</div>
<div class="t" style="left:1324px;top:887.5px;font-size:13.5px;line-height:28px;letter-spacing:-0.45px;color:#d0d4d8">192.168.1.21</div>
<div class="t" style="left:1507px;top:887.5px;font-size:13.5px;line-height:28px;letter-spacing:0px;color:#d0d4d8">0</div>
<div class="t" style="left:184px;top:916.5px;font-size:13.5px;line-height:28px;letter-spacing:-0.25px;font-weight:bold;color:#3b91c6">Switch - TP link POE - Kitchen</div>
<div class="t" style="left:796px;top:916.5px;font-size:13.5px;line-height:28px;letter-spacing:-0.35px;color:#d0d4d8">31/01/2026, 16:10:07</div>
<div class="t" style="left:1084px;top:916.5px;font-size:13.5px;line-height:28px;letter-spacing:-0.25px;color:#d0d4d8">Disconnected</div>
<div class="t" style="left:1324px;top:916.5px;font-size:13.5px;line-height:28px;letter-spacing:-0.45px;color:#d0d4d8">0.0.0.0</div>
<div class="t" style="left:1507px;top:916.5px;font-size:13.5px;line-height:28px;letter-spacing:0px;color:#d0d4d8">0</div>
<div class="t" style="left:184px;top:945.5px;font-size:13.5px;line-height:28px;letter-spacing:-0.35px;font-weight:bold;color:#3b91c6">PC - NUC 3 - LAN</div>
<div class="t" style="left:796px;top:945.5px;font-size:13.5px;line-height:28px;letter-spacing:-0.35px;color:#d0d4d8">31/01/2026, 16:10:07</div>
<div class="t" style="left:1084px;top:945.5px;font-size:13.5px;line-height:28px;letter-spacing:-0.45px;color:#d0d4d8">IP Changed</div>
<div class="t" style="left:1324px;top:945.5px;font-size:13.5px;line-height:28px;letter-spacing:-0.45px;color:#d0d4d8">192.168.1.21</div>
<div class="t" style="left:1507px;top:945.5px;font-size:13.5px;line-height:28px;letter-spacing:0px;color:#d0d4d8">0</div>
<div class="t" style="left:184px;top:974.5px;font-size:13.5px;line-height:28px;letter-spacing:-0.25px;font-weight:bold;color:#3b91c6">Switch - TP link POE - Kitchen</div>
<div class="t" style="left:796px;top:974.5px;font-size:13.5px;line-height:28px;letter-spacing:-0.35px;color:#d0d4d8">31/01/2026, 16:07:50</div>
<div class="t" style="left:1084px;top:974.5px;font-size:13.5px;line-height:28px;letter-spacing:-0.25px;color:#d0d4d8">Disconnected</div>
<div class="t" style="left:1324px;top:974.5px;font-size:13.5px;line-height:28px;letter-spacing:-0.45px;color:#d0d4d8">0.0.0.0</div>
<div class="t" style="left:1507px;top:974.5px;font-size:13.5px;line-height:28px;letter-spacing:0px;color:#d0d4d8">0</div>
<div class="t" style="left:184px;top:1003.5px;font-size:13.5px;line-height:28px;letter-spacing:-0.35px;font-weight:bold;color:#3b91c6">PC - NUC 3 - LAN</div>
<div class="t" style="left:796px;top:1003.5px;font-size:13.5px;line-height:28px;letter-spacing:-0.35px;color:#d0d4d8">31/01/2026, 16:07:50</div>
<div class="t" style="left:1084px;top:1003.5px;font-size:13.5px;line-height:28px;letter-spacing:-0.45px;color:#d0d4d8">IP Changed</div>
<div class="t" style="left:1324px;top:1003.5px;font-size:13.5px;line-height:28px;letter-spacing:-0.45px;color:#d0d4d8">192.168.1.21</div>
<div class="t" style="left:1507px;top:1003.5px;font-size:13.5px;line-height:28px;letter-spacing:0px;color:#d0d4d8">0</div>
<div class="t" style="left:179px;top:1042.5px;font-size:13.6px;line-height:28px;letter-spacing:-0.25px;color:#d0d4d8">Showing 1 to 25 of 57,570 entries</div>
<div class="ab" style="left:1398px;top:1041px;width:379px;height:33px;background:#363c43;border-radius:4px"></div>
<div class="t" style="left:1411px;top:1040.5px;font-size:13.6px;line-height:33px;letter-spacing:-0.2px;color:#cfd3d6;">Previous</div>
<div class="t" style="left:1487px;top:1040.5px;font-size:13.6px;line-height:33px;letter-spacing:-0.2px;color:#ffffff;font-weight:bold;">1</div>
<div class="t" style="left:1518px;top:1040.5px;font-size:13.6px;line-height:33px;letter-spacing:-0.2px;color:#6f757b;">2</div>
<div class="t" style="left:1550px;top:1040.5px;font-size:13.6px;line-height:33px;letter-spacing:-0.2px;color:#6f757b;">3</div>
<div class="t" style="left:1582px;top:1040.5px;font-size:13.6px;line-height:33px;letter-spacing:-0.2px;color:#6f757b;">4</div>
<div class="t" style="left:1614px;top:1040.5px;font-size:13.6px;line-height:33px;letter-spacing:-0.2px;color:#6f757b;">5</div>
<div class="t" style="left:1646px;top:1040.5px;font-size:13.6px;line-height:33px;letter-spacing:-0.2px;color:#e0e0e0;">…</div>
<div class="t" style="left:1685px;top:1040.5px;font-size:13.6px;line-height:33px;letter-spacing:-0.2px;color:#6f757b;">2303</div>
<div class="t" style="left:1738px;top:1040.5px;font-size:13.6px;line-height:33px;letter-spacing:-0.2px;color:#6f757b;">Next</div>
</body></html>
